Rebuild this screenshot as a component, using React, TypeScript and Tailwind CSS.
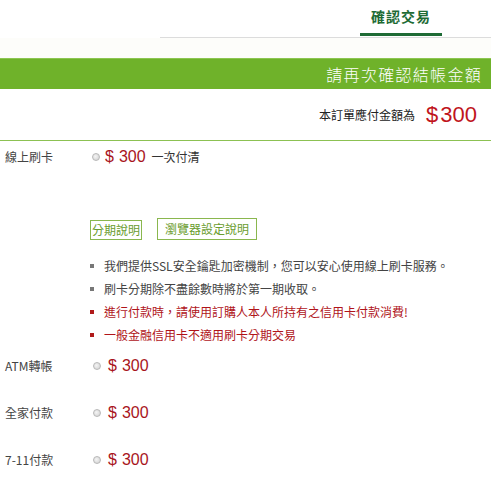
import React from "react";

const cjk = "font-['Noto_Sans_CJK_TC','Noto_Sans_CJK_SC',sans-serif]";
const arial = "font-['Liberation_Sans',Arial,sans-serif]";

function Radio() {
  return (
    <span className="inline-block w-[8px] h-[8px] rounded-full border border-[#b8b8b8] bg-[radial-gradient(circle_at_40%_40%,#f4f4f4,#cfcfcf)] shrink-0" />
  );
}

function Price({ className = "" }: { className?: string }) {
  return (
    <span className={`${arial} text-[16px] leading-none text-[#a8151c] ${className}`}>
      $<span className="ml-[5px]">300</span>
    </span>
  );
}

function PayRow({ label, top }: { label: string; top: string }) {
  return (
    <div className={`flex items-center h-[16px] ${top}`}>
      <div className={`w-[93px] pl-[5px] text-[12px] text-[#444] ${cjk}`}>{label}</div>
      <Radio />
      <Price className="ml-[7px]" />
    </div>
  );
}

export default function App() {
  const bullets = [
    { t: "我們提供SSL安全鑰匙加密機制，您可以安心使用線上刷卡服務。", red: false },
    { t: "刷卡分期除不盡餘數時將於第一期收取。", red: false },
    { t: "進行付款時，請使用訂購人本人所持有之信用卡付款消費!", red: true },
    { t: "一般金融信用卡不適用刷卡分期交易", red: true },
  ];
  return (
    <div className={`w-[491px] h-[481px] bg-white overflow-hidden ${cjk}`}>
      {/* tabs */}
      <div className="ml-[160px] h-[38px] border-b border-[#dcdcdc] flex">
        <div className="ml-[200px] w-[82px] h-[36px] border-b-[3px] border-[#1e6b35] flex items-center justify-center text-[14px] font-bold text-[#1e6b35] tracking-[1px]">
          確認交易
        </div>
      </div>
      <div className="h-[20px] bg-[#fdfdfa]" />
      {/* green bar */}
      <div className="h-[31px] bg-[#6fb22a] border-t border-[#8cc650] flex items-center justify-end pr-[9px]">
        <span className="text-white text-[16px] tracking-[1.3px] font-light">請再次確認結帳金額</span>
      </div>
      {/* amount */}
      <div className="h-[52px] border-b border-[#8cc152] flex items-center justify-end pr-[14px]">
        <span className="text-[12px] text-[#222] mr-[11px]">本訂單應付金額為</span>
        <span className={`${arial} text-[22px] leading-none text-[#c0141c]`}>
          $<span className="ml-[2px]">300</span>
        </span>
      </div>
      {/* online card */}
      <div className="flex items-center h-[16px] mt-[8px]">
        <div className="w-[92px] pl-[5px] text-[12px] text-[#444]">線上刷卡</div>
        <Radio />
        <Price className="ml-[5px]" />
        <span className="ml-[6px] text-[12px] text-[#333]">一次付清</span>
      </div>
      <div className="ml-[90px] mt-[53px] flex items-end gap-[15px]">
        <span className="border border-[#8ab74e] text-[#6a9c2e] text-[12px] leading-[16px] px-[1px] py-[1px]">分期說明</span>
        <span className="border border-[#8ab74e] text-[#6a9c2e] text-[12px] leading-[16px] px-[7px] py-[2px]">瀏覽器設定說明</span>
      </div>
      <ul className="ml-[90px] mt-[14px] flex flex-col">
        {bullets.map((b) => (
          <li key={b.t} className="flex items-center h-[23px]">
            <span className={`w-[4px] h-[4px] ${b.red ? "bg-[#b01a1a]" : "bg-[#777]"}`} />
            <span className={`ml-[10px] text-[12px] ${b.red ? "text-[#b0141a]" : "text-[#444]"}`}>{b.t}</span>
          </li>
        ))}
      </ul>
      <PayRow label="ATM轉帳" top="mt-[12px]" />
      <PayRow label="全家付款" top="mt-[31px]" />
      <PayRow label="7-11付款" top="mt-[31px]" />
    </div>
  );
}
